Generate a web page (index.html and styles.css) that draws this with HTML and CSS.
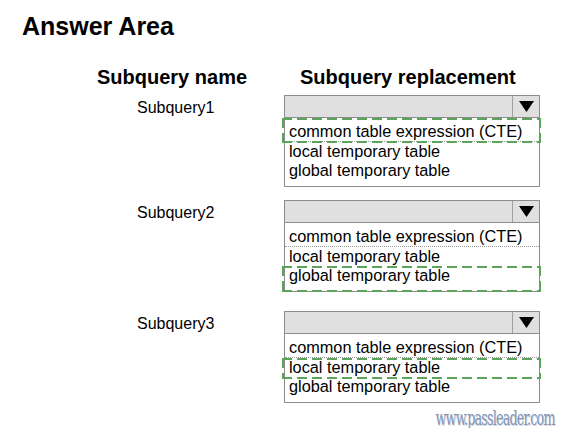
FILE: index.html
```html
<!DOCTYPE html>
<html lang="en">
<head>
    <meta charset="UTF-8">
    <title>Answer Area</title>
    <link rel="stylesheet" href="styles.css">
</head>
<body>
    <h1 class="title">Answer Area</h1>

    <div class="headings">
        <div class="col-name">Subquery name</div>
        <div class="col-replacement">Subquery replacement</div>
    </div>

    <div class="row row-1">
        <div class="label">Subquery1</div>
        <div class="dropdown">
            <div class="dropdown-head">
                <span class="arrow"><svg width="15" height="11" viewBox="0 0 15 11"><polygon points="0,0 15,0 7.5,11" fill="#000"/></svg></span>
            </div>
            <ul class="options">
                <li class="picked">common table expression (CTE)</li>
                <li>local temporary table</li>
                <li>global temporary table</li>
            </ul>
        </div>
    </div>

    <div class="row row-2">
        <div class="label">Subquery2</div>
        <div class="dropdown">
            <div class="dropdown-head">
                <span class="arrow"><svg width="15" height="11" viewBox="0 0 15 11"><polygon points="0,0 15,0 7.5,11" fill="#000"/></svg></span>
            </div>
            <ul class="options">
                <li>common table expression (CTE)</li>
                <li>local temporary table</li>
                <li class="picked">global temporary table</li>
            </ul>
        </div>
    </div>

    <div class="row row-3">
        <div class="label">Subquery3</div>
        <div class="dropdown">
            <div class="dropdown-head">
                <span class="arrow"><svg width="15" height="11" viewBox="0 0 15 11"><polygon points="0,0 15,0 7.5,11" fill="#000"/></svg></span>
            </div>
            <ul class="options">
                <li>common table expression (CTE)</li>
                <li class="picked">local temporary table</li>
                <li>global temporary table</li>
            </ul>
        </div>
    </div>

    <div class="watermark"><span>www.passleader.com</span></div>
</body>
</html>
```

FILE: styles.css
```css
/* Base */
body {
    margin: 0;
    padding: 0;
    background-color: #ffffff;
    color: #000000;
    font-family: "Liberation Sans", Arial, sans-serif;
    width: 567px;
    height: 428px;
    overflow: hidden;
}

/* Page title */
.title {
    margin: 11px 0 0 22px;
    font-size: 25px;
    line-height: 30px;
    font-weight: bold;
}

/* Column headings */
.headings {
    display: flex;
    margin-top: 24px;
    padding-left: 97px;
    font-size: 20px;
    line-height: 24px;
    font-weight: bold;
    white-space: nowrap;
}

.col-name {
    width: 148px;
    text-align: center;
}

.col-replacement {
    margin-left: 39px;
    padding-left: 16px;
}

/* One row per subquery */
.row {
    display: flex;
    align-items: flex-start;
    padding-left: 97px;
}

.row-1 { margin-top: 6px; }
.row-2 { margin-top: 13px; }
.row-3 { margin-top: 19px; }

.label {
    width: 108px;
    padding-left: 40px;
    padding-top: 2px;
    font-size: 16px;
    line-height: 22px;
}

/* Dropdown box */
.dropdown {
    width: 254px;
    margin-left: 39px;
    border: 1px solid #8c8c8c;
}

.dropdown-head {
    display: flex;
    justify-content: flex-end;
    height: 21px;
    background-color: #e0e0e0;
    border-bottom: 1px solid #8c8c8c;
}

.arrow {
    display: flex;
    align-items: center;
    justify-content: center;
    width: 26px;
    border-left: 1px solid #a0a0a0;
}

.options {
    list-style: none;
    margin: 0;
    padding: 0;
    font-size: 16.3px;
}

.options li {
    position: relative;
    padding-left: 4px;
    line-height: 19px;
    white-space: nowrap;
}

.options li:first-child {
    padding-top: 4px;
    border-bottom: 1px dotted #9a9a9a;
}

.options li:last-child {
    padding-bottom: 6px;
}

/* Green dashed frame around the right answer */
.options li.picked::after {
    content: "";
    position: absolute;
    top: 0;
    left: -3px;
    right: -2px;
    bottom: -2px;
    background:
        repeating-linear-gradient(90deg, #5aa55a 0 10px, transparent 10px 15px) top left / 100% 2px no-repeat,
        repeating-linear-gradient(90deg, #5aa55a 0 10px, transparent 10px 15px) bottom left / 100% 2px no-repeat,
        repeating-linear-gradient(180deg, #5aa55a 0 10px, transparent 10px 15px) top left / 2px 100% no-repeat,
        repeating-linear-gradient(180deg, #5aa55a 0 10px, transparent 10px 15px) top right / 2px 100% no-repeat;
}

.options li:last-child.picked::after {
    bottom: -1px;
}

/* Site watermark */
.watermark {
    margin-top: 5px;
    padding-right: 12px;
    text-align: right;
    font-family: "DejaVu Serif Condensed", "Liberation Serif", serif;
    font-size: 18px;
    line-height: 20px;
    color: #8393b4;
    letter-spacing: -1px;
    text-shadow: 1px 1px 0 #d6dbe6;
}

.watermark span {
    display: inline-block;
    transform: scale(0.78, 1.1);
    transform-origin: right center;
}
```
